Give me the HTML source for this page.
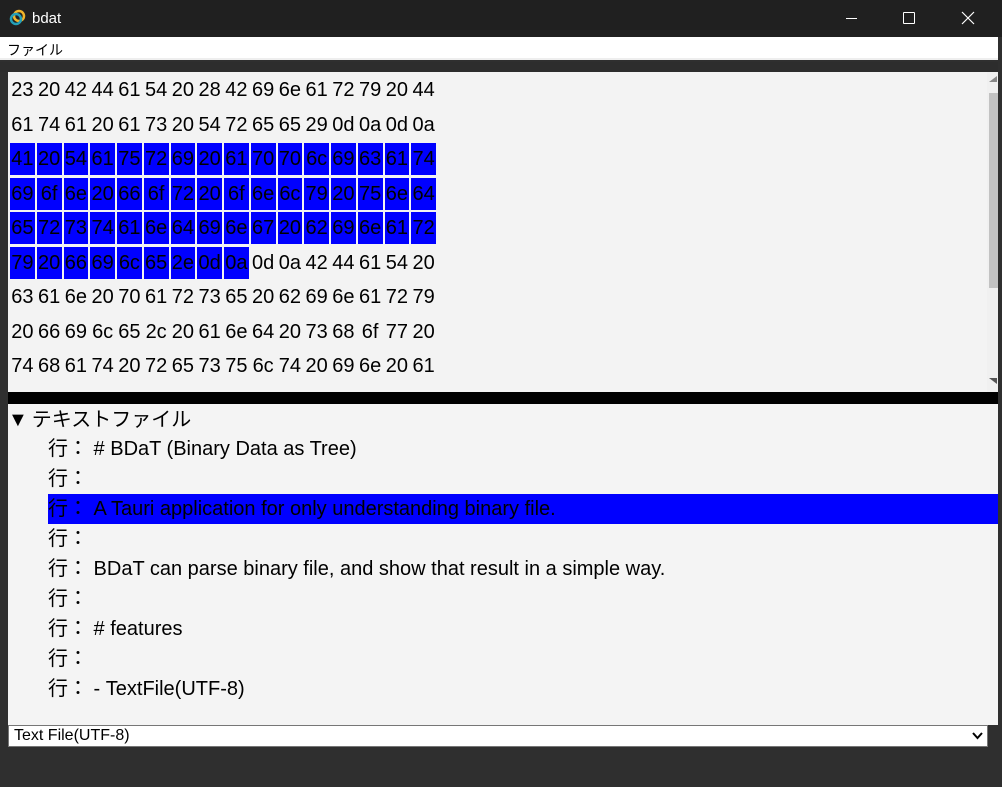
<!DOCTYPE html>
<html><head><meta charset="utf-8"><style>
*{margin:0;padding:0;box-sizing:border-box}
body{width:1002px;height:787px;background:#2f2f2f;position:relative;overflow:hidden;font-family:"Liberation Sans","Noto Sans CJK JP",sans-serif}
.title{position:absolute;left:0;top:0;width:1002px;height:37px;background:#202020;color:#fff}
.menu{position:absolute;left:0;top:37px;width:998px;height:23px;background:#fff;font-size:14px;padding:3px 7px;border-bottom:2px solid #eee}
.gap{position:absolute;left:0;top:62px;width:998px;height:10px;background:#2d2d2d}
.hex{position:absolute;left:8px;top:72px;width:990px;height:320px;background:#f3f3f3}
.grid{position:absolute;left:2px;top:2px;display:grid;grid-template-columns:repeat(16,24.75px);column-gap:2px;row-gap:2.5px}
.grid span{height:32px;line-height:32px;font-size:20px;text-align:center;color:#000}
.grid span.h{background:#0000ff}
.sb{position:absolute;left:979px;top:0;width:11px;height:320px;background:#f0f0f0}
.thumb{position:absolute;left:2px;top:21px;width:9px;height:195px;background:#c2c2c2}
.black{position:absolute;left:8px;top:392px;width:990px;height:12px;background:#000}
.tree{position:absolute;left:8px;top:404px;width:990px;height:321px;background:#f4f4f4;font-size:20px}
.tree .hd{position:absolute;left:0;top:2px;line-height:28px}
.ln{position:absolute;left:40px;width:950px;height:30px;line-height:30px;white-space:pre}
.ln.h{background:#0000ff}
.sel{position:absolute;left:8px;top:725px;width:980px;height:22px;background:#fff;border:1px solid #767676;font-size:16px;line-height:20px;padding-left:5px}
</style></head><body>
<div class="title">
<svg style="position:absolute;left:9px;top:9px" width="17" height="17" viewBox="0 0 17 17"><circle cx="10" cy="7" r="5" fill="none" stroke="#f0b429" stroke-width="2.5"/><circle cx="7" cy="10" r="5" fill="none" stroke="#24a0b8" stroke-width="2.5"/></svg>
<span style="position:absolute;left:32px;top:10px;font-size:15px">bdat</span>
<div style="position:absolute;left:846px;top:18px;width:11px;height:1px;background:#fff"></div>
<div style="position:absolute;left:903px;top:12px;width:12px;height:12px;border:1px solid #fff;border-radius:1px"></div>
<svg style="position:absolute;left:961px;top:11px" width="14" height="14"><path d="M1 1L13 13M13 1L1 13" stroke="#fff" stroke-width="1.2"/></svg>
</div>
<div class="menu">ファイル</div>
<div class="gap"></div>
<div class="hex"><div class="grid">
<span>23</span><span>20</span><span>42</span><span>44</span><span>61</span><span>54</span><span>20</span><span>28</span><span>42</span><span>69</span><span>6e</span><span>61</span><span>72</span><span>79</span><span>20</span><span>44</span>
<span>61</span><span>74</span><span>61</span><span>20</span><span>61</span><span>73</span><span>20</span><span>54</span><span>72</span><span>65</span><span>65</span><span>29</span><span>0d</span><span>0a</span><span>0d</span><span>0a</span>
<span class="h">41</span><span class="h">20</span><span class="h">54</span><span class="h">61</span><span class="h">75</span><span class="h">72</span><span class="h">69</span><span class="h">20</span><span class="h">61</span><span class="h">70</span><span class="h">70</span><span class="h">6c</span><span class="h">69</span><span class="h">63</span><span class="h">61</span><span class="h">74</span>
<span class="h">69</span><span class="h">6f</span><span class="h">6e</span><span class="h">20</span><span class="h">66</span><span class="h">6f</span><span class="h">72</span><span class="h">20</span><span class="h">6f</span><span class="h">6e</span><span class="h">6c</span><span class="h">79</span><span class="h">20</span><span class="h">75</span><span class="h">6e</span><span class="h">64</span>
<span class="h">65</span><span class="h">72</span><span class="h">73</span><span class="h">74</span><span class="h">61</span><span class="h">6e</span><span class="h">64</span><span class="h">69</span><span class="h">6e</span><span class="h">67</span><span class="h">20</span><span class="h">62</span><span class="h">69</span><span class="h">6e</span><span class="h">61</span><span class="h">72</span>
<span class="h">79</span><span class="h">20</span><span class="h">66</span><span class="h">69</span><span class="h">6c</span><span class="h">65</span><span class="h">2e</span><span class="h">0d</span><span class="h">0a</span><span>0d</span><span>0a</span><span>42</span><span>44</span><span>61</span><span>54</span><span>20</span>
<span>63</span><span>61</span><span>6e</span><span>20</span><span>70</span><span>61</span><span>72</span><span>73</span><span>65</span><span>20</span><span>62</span><span>69</span><span>6e</span><span>61</span><span>72</span><span>79</span>
<span>20</span><span>66</span><span>69</span><span>6c</span><span>65</span><span>2c</span><span>20</span><span>61</span><span>6e</span><span>64</span><span>20</span><span>73</span><span>68</span><span>6f</span><span>77</span><span>20</span>
<span>74</span><span>68</span><span>61</span><span>74</span><span>20</span><span>72</span><span>65</span><span>73</span><span>75</span><span>6c</span><span>74</span><span>20</span><span>69</span><span>6e</span><span>20</span><span>61</span>
</div>
<div class="sb"><div class="thumb"></div>
<svg style="position:absolute;left:2px;top:4px" width="8" height="6"><path d="M0 6L8 6L8 0Z" fill="#888"/></svg>
<svg style="position:absolute;left:2px;top:306px" width="8" height="6"><path d="M0 0L8 0L8 6Z" fill="#555"/></svg>
</div></div>
<div class="black"></div>
<div class="tree">
<div class="hd">▼&#8201;テキストファイル</div>
<div class="ln" style="top:30px">行： # BDaT (Binary Data as Tree)</div>
<div class="ln" style="top:60px">行：</div>
<div class="ln h" style="top:90px">行： A Tauri application for only understanding binary file.</div>
<div class="ln" style="top:120px">行：</div>
<div class="ln" style="top:150px">行： BDaT can parse binary file, and show that result in a simple way.</div>
<div class="ln" style="top:180px">行：</div>
<div class="ln" style="top:210px">行： # features</div>
<div class="ln" style="top:240px">行：</div>
<div class="ln" style="top:270px">行： - TextFile(UTF-8)</div>
</div>
<div class="sel">Text File(UTF-8)
<svg style="position:absolute;right:4px;top:6px" width="11" height="8"><path d="M1 1L5.5 6L10 1" fill="none" stroke="#000" stroke-width="2"/></svg></div>
</body></html>
